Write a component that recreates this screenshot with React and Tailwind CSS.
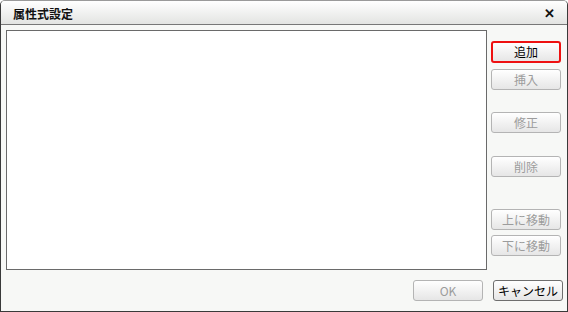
import React from "react";

const font = { fontFamily: '"Noto Sans CJK JP", "Noto Sans", sans-serif' };

function Btn({ children, disabled, focus, className = "" }) {
  const base =
    "flex items-center justify-center w-[70px] h-[21px] rounded-[3px] text-[12px] leading-none bg-gradient-to-b from-[#ffffff] to-[#e6e6e6]";
  const border = focus
    ? "border-2 border-[#ee1111] text-black"
    : disabled
    ? "border border-[#b4b4b4] text-[#9c9c9c]"
    : "border border-[#6e6e6e] text-black";
  return <div className={`${base} ${border} ${className}`}>{children}</div>;
}

export default function App() {
  return (
    <div
      style={font}
      className="w-[568px] h-[312px] flex flex-col bg-[#f7f8f6] border border-[#3a3a3a] border-t-[#9a9a9a] rounded-t-[5px] overflow-hidden"
    >
      <div className="h-[24px] flex items-center justify-between border-b border-[#777] bg-gradient-to-b from-[#ffffff] to-[#e3e4e2] pl-[12px] pr-[12px] shrink-0">
        <span className="text-[12px] font-semibold text-[#111] leading-none pt-[2px]">属性式設定</span>
        <span className="text-[13px] font-bold text-[#111] leading-none">✕</span>
      </div>
      <div className="flex flex-col pl-[5px] pr-[4px] pt-[5px]">
        <div className="flex gap-[4px]">
          <div className="w-[481px] h-[240px] bg-white border border-[#6a6a6a]" />
          <div className="flex flex-col">
            <Btn focus className="mt-[11px] h-[22px]">追加</Btn>
            <Btn disabled className="mt-[6px]">挿入</Btn>
            <Btn disabled className="mt-[22px]">修正</Btn>
            <Btn disabled className="mt-[23px]">削除</Btn>
            <Btn disabled className="mt-[32px]">上に移動</Btn>
            <Btn disabled className="mt-[5px]">下に移動</Btn>
          </div>
        </div>
        <div className="flex justify-end gap-[10px] mt-[10px]">
          <Btn disabled>OK</Btn>
          <Btn>キャンセル</Btn>
        </div>
      </div>
    </div>
  );
}
